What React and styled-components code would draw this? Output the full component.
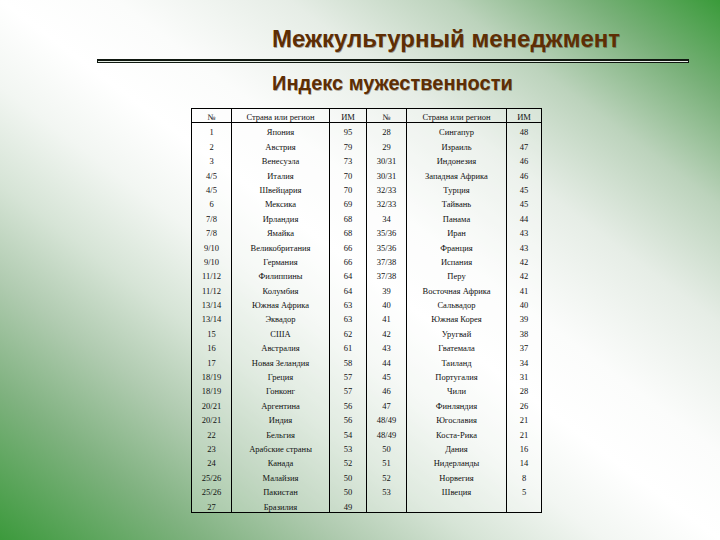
import React from 'react'
import styled, { createGlobalStyle } from 'styled-components'

const GlobalStyle = createGlobalStyle`
  html, body {
    margin: 0;
    padding: 0;
  }
  body {
    font-family: "Liberation Sans", Arial, sans-serif;
  }
`

const Slide = styled.div`
  width: 720px;
  height: 540px;
  overflow: hidden;
  box-sizing: border-box;
  padding-top: 26px;
  display: flex;
  flex-direction: column;
  align-items: flex-start;
  background: linear-gradient(
    to bottom left,
    #3a9b3a 0%,
    #78b078 9%,
    #bcd3bc 19%,
    #e6ede6 30%,
    #fbfcfb 42%,
    #ffffff 50%,
    #f2f6f2 58%,
    #d6e4d6 67%,
    #b0cbb0 76%,
    #80b280 86%,
    #3c9a3c 100%
  );
`

const Title = styled.h1`
  margin: 0 0 0 272px;
  font-size: 24px;
  line-height: 26px;
  font-weight: bold;
  color: #5e2e04;
  text-shadow: 0.5px 0.5px 0.5px rgba(40, 20, 0, 0.35);
`

const Rule = styled.div`
  margin: 7px 0 0 97px;
  width: 590px;
  height: 1px;
  border: 1px solid #101810;
  border-top-width: 2px;
  background: #e4ece4;
`

const Subtitle = styled.h2`
  margin: 9px 0 0 272px;
  font-size: 20px;
  line-height: 22px;
  font-weight: bold;
  color: #5e2e04;
  text-shadow: 0.5px 0.5px 0.5px rgba(40, 20, 0, 0.35);
`

const Table = styled.table`
  margin: 14px 0 0 191px;
  width: 350px;
  table-layout: fixed;
  border-collapse: collapse;
  border: 1px solid #000;
  background: rgba(255, 255, 255, 0.25);
  font-family: "Liberation Serif", "Times New Roman", serif;
  font-size: 8.5px;
  color: #111;
`

const HeadCell = styled.th`
  height: 13px;
  padding: 0;
  font-weight: normal;
  line-height: 9px;
  text-align: center;
  vertical-align: bottom;
  white-space: nowrap;
  border-left: 1px solid #000;
  border-bottom: 1px solid #000;
`

const Cell = styled.td`
  height: 14.4px;
  padding: 0;
  line-height: 9px;
  text-align: center;
  vertical-align: bottom;
  white-space: nowrap;
  border-left: 1px solid #000;
`

const rows = [
  ['1', 'Япония', '95', '28', 'Сингапур', '48'],
  ['2', 'Австрия', '79', '29', 'Израиль', '47'],
  ['3', 'Венесуэла', '73', '30/31', 'Индонезия', '46'],
  ['4/5', 'Италия', '70', '30/31', 'Западная Африка', '46'],
  ['4/5', 'Швейцария', '70', '32/33', 'Турция', '45'],
  ['6', 'Мексика', '69', '32/33', 'Тайвань', '45'],
  ['7/8', 'Ирландия', '68', '34', 'Панама', '44'],
  ['7/8', 'Ямайка', '68', '35/36', 'Иран', '43'],
  ['9/10', 'Великобритания', '66', '35/36', 'Франция', '43'],
  ['9/10', 'Германия', '66', '37/38', 'Испания', '42'],
  ['11/12', 'Филиппины', '64', '37/38', 'Перу', '42'],
  ['11/12', 'Колумбия', '64', '39', 'Восточная Африка', '41'],
  ['13/14', 'Южная Африка', '63', '40', 'Сальвадор', '40'],
  ['13/14', 'Эквадор', '63', '41', 'Южная Корея', '39'],
  ['15', 'США', '62', '42', 'Уругвай', '38'],
  ['16', 'Австралия', '61', '43', 'Гватемала', '37'],
  ['17', 'Новая Зеландия', '58', '44', 'Таиланд', '34'],
  ['18/19', 'Греция', '57', '45', 'Португалия', '31'],
  ['18/19', 'Гонконг', '57', '46', 'Чили', '28'],
  ['20/21', 'Аргентина', '56', '47', 'Финляндия', '26'],
  ['20/21', 'Индия', '56', '48/49', 'Югославия', '21'],
  ['22', 'Бельгия', '54', '48/49', 'Коста-Рика', '21'],
  ['23', 'Арабские страны', '53', '50', 'Дания', '16'],
  ['24', 'Канада', '52', '51', 'Нидерланды', '14'],
  ['25/26', 'Малайзия', '50', '52', 'Норвегия', '8'],
  ['25/26', 'Пакистан', '50', '53', 'Швеция', '5'],
  ['27', 'Бразилия', '49', '', '', ''],
]

const widths = [40, 98, 37, 40, 100, 35]
const headers = ['№', 'Страна или регион', 'ИМ', '№', 'Страна или регион', 'ИМ']

const App = () => (
  <Slide>
    <GlobalStyle />
    <Title>Межкультурный менеджмент</Title>
    <Rule />
    <Subtitle>Индекс мужественности</Subtitle>
    <Table>
      <colgroup>
        {widths.map((w, i) => (
          <col key={i} style={{ width: w }} />
        ))}
      </colgroup>
      <thead>
        <tr>
          {headers.map((h, i) => (
            <HeadCell key={i}>{h}</HeadCell>
          ))}
        </tr>
      </thead>
      <tbody>
        {rows.map((row, r) => (
          <tr key={r}>
            {row.map((v, c) => (
              <Cell key={c}>{v}</Cell>
            ))}
          </tr>
        ))}
      </tbody>
    </Table>
  </Slide>
)

export default App
